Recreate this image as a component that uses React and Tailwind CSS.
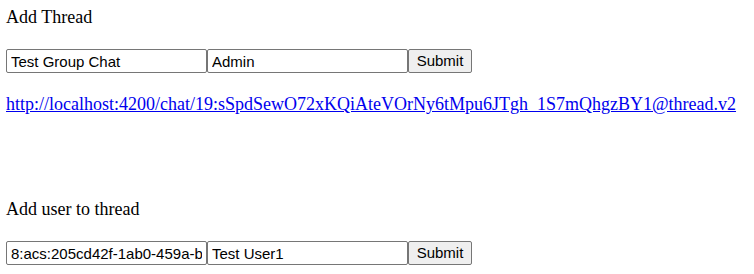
export default function App() {
  const serif = { fontFamily: '"Liberation Serif", "Times New Roman", serif' };
  return (
    <div className="bg-white w-[754px] h-[274px] overflow-hidden pl-[6px] pt-[7px] text-black" style={serif}>
      <div className="text-[18px] leading-[20px]">Add Thread</div>
      <div className="flex mt-[22px] h-[24px]" style={{ fontFamily: '"Liberation Sans", Arial, sans-serif' }}>
        <input
          className="w-[201px] h-[24px] border border-[#767676] rounded-[2px] px-[4px] text-[15px] text-black bg-white outline-none"
          defaultValue="Test Group Chat"
        />
        <input
          className="w-[201px] h-[24px] border border-[#767676] rounded-[2px] px-[4px] text-[15px] text-black bg-white outline-none"
          defaultValue="Admin"
        />
        <button className="w-[64px] h-[24px] border border-[#767676] rounded-[2px] bg-[#efefef] text-[15px] text-black">
          Submit
        </button>
      </div>
      <div className="mt-[21px] text-[18px] leading-[20px]">
        <a href="#" className="text-[#0000ee] underline whitespace-nowrap">
          http://localhost:4200/chat/19:sSpdSewO72xKQiAteVOrNy6tMpu6JTgh_1S7mQhgzBY1@thread.v2
        </a>
      </div>
      <div className="mt-[85px] text-[18px] leading-[20px]">Add user to thread</div>
      <div className="flex mt-[22px] h-[24px]" style={{ fontFamily: '"Liberation Sans", Arial, sans-serif' }}>
        <input
          className="w-[201px] h-[24px] border border-[#767676] rounded-[2px] px-[4px] text-[15px] text-black bg-white outline-none"
          defaultValue="8:acs:205cd42f-1ab0-459a-b"
        />
        <input
          className="w-[201px] h-[24px] border border-[#767676] rounded-[2px] px-[4px] text-[15px] text-black bg-white outline-none"
          defaultValue="Test User1"
        />
        <button className="w-[64px] h-[24px] border border-[#767676] rounded-[2px] bg-[#efefef] text-[15px] text-black">
          Submit
        </button>
      </div>
    </div>
  );
}
